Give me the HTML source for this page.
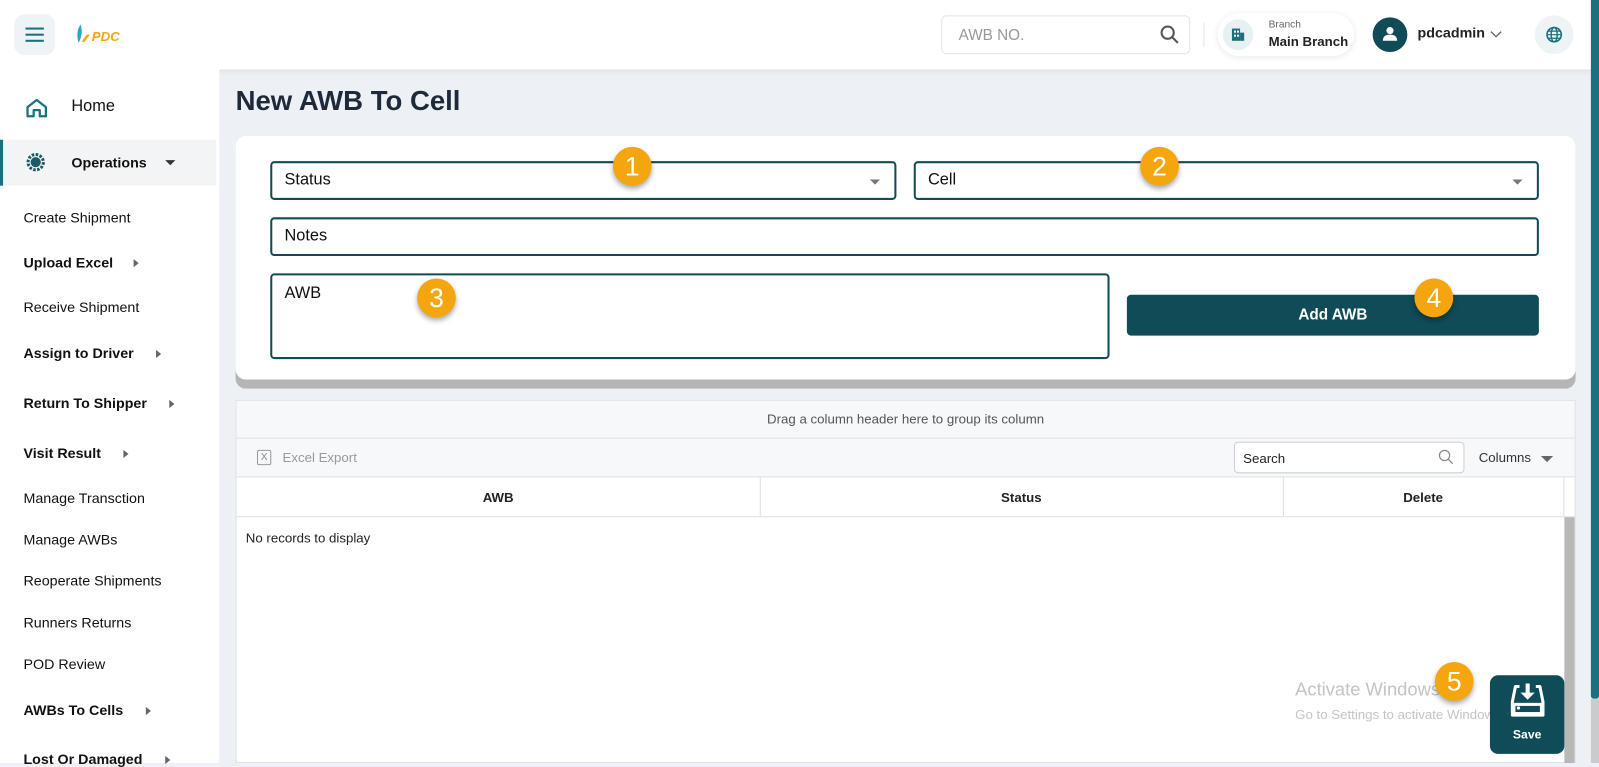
<!DOCTYPE html>
<html><head><meta charset="utf-8"><style>
*{box-sizing:border-box;margin:0;padding:0}
html,body{width:1599px;height:763px;overflow:hidden;background:#edf0f4;font-family:"Liberation Sans",Arial,sans-serif}
#w{position:absolute;left:0;top:0;width:1568px;height:748px;transform:scale(1.0198,1.0201);transform-origin:0 0;background:#edf0f4}
.a{position:absolute}
.top{left:0;top:0;width:1568px;height:68px;background:#fff;box-shadow:0 2px 6px rgba(0,0,0,.06)}
.side{left:0;top:68px;width:215px;height:680px;background:#fff}
.si{position:absolute;left:23px;font-size:14px;color:#111}
.si.b{font-weight:bold}
.tri{display:inline-block;width:0;height:0;border-top:4px solid transparent;border-bottom:4px solid transparent;border-left:5px solid #666;margin-left:14px;vertical-align:middle}
.box{position:absolute;border:2px solid #0f4c57;border-radius:4px;background:#fff;font-size:16px;color:#111;padding-left:12px}
.dd{position:absolute;right:14px;top:16px;border-left:5px solid transparent;border-right:5px solid transparent;border-top:5px solid #777}
.bd{position:absolute;width:38px;height:38px;border-radius:50%;background:#f5a60e;color:#fff;font-size:26px;text-align:center;line-height:38px;box-shadow:0 3px 5px rgba(0,0,0,.35)}
.gl{position:absolute;background:#dde1e6}
</style></head><body><div id="w">
<div class="a top">
 <div class="a" style="left:14px;top:14px;width:40px;height:40px;border-radius:10px;background:#eef3f6">
  <div class="a" style="left:11px;top:13px;width:18px;height:2px;background:#1c6f7d"></div>
  <div class="a" style="left:11px;top:19px;width:18px;height:2px;background:#1c6f7d"></div>
  <div class="a" style="left:11px;top:25px;width:18px;height:2px;background:#1c6f7d"></div>
 </div>
 <svg class="a" style="left:73px;top:22px" width="56" height="24"><path d="M6 2 Q1 9 4 20 Q9 11 6 2Z" fill="#2aa6c4"/><path d="M7 19 L12 12 L15 12 L10 19Z" fill="#f5a60e"/><text x="17" y="18" font-family="Liberation Sans" font-weight="bold" font-style="italic" font-size="13" fill="#f5a60e">PDC</text></svg>
 <div class="a" style="left:923px;top:15px;width:244px;height:38px;border:1px solid #e3e6ea;border-radius:5px;font-size:15px;color:#999;padding:10px 0 0 16px">AWB NO.</div>
 <svg class="a" style="left:1137px;top:24px" width="20" height="20"><circle cx="8" cy="8" r="6" fill="none" stroke="#555" stroke-width="2"/><path d="M12.5 12.5L18 18" stroke="#555" stroke-width="2"/></svg>
 <div class="a" style="left:1180px;top:22px;width:1px;height:24px;background:#e3e6ea"></div>
 <div class="a" style="left:1194px;top:13px;width:134px;height:42px;border-radius:21px;background:#fff;box-shadow:0 1px 6px rgba(0,0,0,.1)">
  <div class="a" style="left:5px;top:6px;width:30px;height:30px;border-radius:50%;background:#e7f0f3"></div>
  <svg class="a" style="left:13px;top:14px" width="14" height="14"><rect x="1" y="1" width="8" height="12" fill="#1c6f7d"/><rect x="9" y="5" width="4" height="8" fill="#1c6f7d"/><rect x="3" y="3" width="2" height="2" fill="#fff"/><rect x="6" y="3" width="2" height="2" fill="#fff"/><rect x="3" y="7" width="2" height="2" fill="#fff"/><rect x="6" y="7" width="2" height="2" fill="#fff"/></svg>
  <div class="a" style="left:50px;top:6px;font-size:10px;color:#666">Branch</div>
  <div class="a" style="left:50px;top:20px;font-size:13px;font-weight:bold;color:#222">Main Branch</div>
 </div>
 <div class="a" style="left:1346px;top:17px;width:34px;height:34px;border-radius:50%;background:#114b57"></div>
 <svg class="a" style="left:1354px;top:24px" width="18" height="18"><circle cx="9" cy="6" r="3.5" fill="#fff"/><path d="M2 16 Q2 10 9 10 Q16 10 16 16Z" fill="#fff"/></svg>
 <div class="a" style="left:1390px;top:24px;font-size:14px;font-weight:bold;color:#222">pdcadmin</div>
 <svg class="a" style="left:1461px;top:30px" width="12" height="8"><path d="M1 1L6 6L11 1" fill="none" stroke="#666" stroke-width="1.3"/></svg>
 <div class="a" style="left:1505px;top:15px;width:38px;height:38px;border-radius:50%;background:#eef3f6"></div>
 <svg class="a" style="left:1515px;top:25px" width="18" height="18"><circle cx="9" cy="9" r="7" fill="none" stroke="#1c6f7d" stroke-width="1.6"/><ellipse cx="9" cy="9" rx="3" ry="7" fill="none" stroke="#1c6f7d" stroke-width="1.4"/><path d="M2 9H16M3 5.5H15M3 12.5H15" stroke="#1c6f7d" stroke-width="1.2"/></svg>
</div>
<div class="a" style="left:1560px;top:0;width:8px;height:685px;background:#1c6f7d;border-radius:0 0 3px 3px"></div>
<div class="a" style="left:1560px;top:685px;width:8px;height:63px;background:#c9cbcd"></div>
<div class="a side">
 <svg class="a" style="left:25px;top:28px" width="22" height="20"><path d="M2 9L11 2L20 9V18H14V12H8V18H2Z" fill="none" stroke="#1c6f7d" stroke-width="2.2" stroke-linejoin="round"/></svg>
 <div class="a" style="left:70px;top:28px;font-size:16px;color:#111">Home</div>
 <div class="a" style="left:0;top:69px;width:212px;height:45px;background:#f3f4f5;border-left:3px solid #1c6f7d"></div>
 <svg class="a" style="left:25px;top:81px" width="20" height="20"><circle cx="10" cy="10" r="7.5" fill="none" stroke="#1c5a66" stroke-width="3" stroke-dasharray="2.5 1.4"/><circle cx="10" cy="10" r="5" fill="#1c5a66"/></svg>
 <div class="a" style="left:70px;top:83px;font-size:14px;font-weight:bold;color:#111">Operations</div>
 <div class="a" style="left:162px;top:89px;border-left:5px solid transparent;border-right:5px solid transparent;border-top:5px solid #333"></div>
 <div class="si" style="top:137px">Create Shipment</div>
 <div class="si b" style="top:181px">Upload Excel<span class="tri" style="margin-left:20px"></span></div>
 <div class="si" style="top:225px">Receive Shipment</div>
 <div class="si b" style="top:270px">Assign to Driver<span class="tri" style="margin-left:22px"></span></div>
 <div class="si b" style="top:319px">Return To Shipper<span class="tri" style="margin-left:22px"></span></div>
 <div class="si b" style="top:368px">Visit Result<span class="tri" style="margin-left:22px"></span></div>
 <div class="si" style="top:412px">Manage Transction</div>
 <div class="si" style="top:453px">Manage AWBs</div>
 <div class="si" style="top:493px">Reoperate Shipments</div>
 <div class="si" style="top:534px">Runners Returns</div>
 <div class="si" style="top:575px">POD Review</div>
 <div class="si b" style="top:620px">AWBs To Cells<span class="tri" style="margin-left:22px"></span></div>
 <div class="si b" style="top:668px">Lost Or Damaged<span class="tri" style="margin-left:22px"></span></div>
</div>
<div class="a" style="left:231px;top:84px;font-size:27px;font-weight:bold;color:#1e2a3a">New AWB To Cell</div>
<div class="a" style="left:231px;top:133px;width:1314px;height:248px;border-radius:10px;background:#b5b5b5"></div>
<div class="a" style="left:231px;top:133px;width:1314px;height:239px;border-radius:10px;background:#fff"></div>
<div class="box" style="left:265px;top:158px;width:614px;height:38px;line-height:34px">Status<div class="dd"></div></div>
<div class="box" style="left:896px;top:158px;width:613px;height:38px;line-height:34px">Cell<div class="dd"></div></div>
<div class="box" style="left:265px;top:213px;width:1244px;height:38px;line-height:34px">Notes</div>
<div class="box" style="left:265px;top:268px;width:823px;height:84px;padding-top:9px">AWB</div>
<div class="a" style="left:1105px;top:289px;width:404px;height:40px;border-radius:4px;background:#0f4c57;color:#fff;font-size:15px;font-weight:bold;text-align:center;line-height:40px">Add AWB</div>
<div class="bd" style="left:601px;top:144px">1</div>
<div class="bd" style="left:1118px;top:144px">2</div>
<div class="bd" style="left:409px;top:273px">3</div>
<div class="bd" style="left:1387px;top:273px">4</div>
<div class="a" style="left:231px;top:392px;width:1314px;height:356px;background:#fff;border:1px solid #dde1e6"></div>
<div class="a" style="left:232px;top:393px;width:1312px;height:74px;background:#f7f8fa"></div>
<div class="gl" style="left:232px;top:429px;width:1312px;height:1px"></div>
<div class="gl" style="left:232px;top:467px;width:1312px;height:1px"></div>
<div class="gl" style="left:232px;top:506px;width:1312px;height:1px"></div>
<div class="a" style="left:232px;top:403px;width:1312px;text-align:center;font-size:13px;color:#555">Drag a column header here to group its column</div>
<div class="a" style="left:252px;top:441px;width:14px;height:15px;border:1px solid #999;border-radius:2px;font-size:10px;color:#888;text-align:center;line-height:13px">X</div>
<div class="a" style="left:277px;top:441px;font-size:13px;color:#999">Excel Export</div>
<div class="a" style="left:1210px;top:433px;width:226px;height:31px;background:#fff;border:1px solid #ccd0d5;border-radius:4px;font-size:13px;color:#222;padding:8px 0 0 8px">Search</div>
<svg class="a" style="left:1410px;top:440px" width="16" height="16"><circle cx="6.5" cy="6.5" r="5" fill="none" stroke="#888" stroke-width="1.2"/><path d="M10 10L14.5 14.5" stroke="#888" stroke-width="1.2"/></svg>
<div class="a" style="left:1450px;top:441px;font-size:13px;color:#333">Columns</div>
<div class="a" style="left:1511px;top:447px;border-left:6px solid transparent;border-right:6px solid transparent;border-top:6px solid #666"></div>
<div class="gl" style="left:745px;top:468px;width:1px;height:38px"></div>
<div class="gl" style="left:1258px;top:468px;width:1px;height:38px"></div>
<div class="gl" style="left:1533px;top:468px;width:1px;height:38px"></div>
<div class="a" style="left:232px;top:480px;width:513px;text-align:center;font-size:13px;font-weight:bold;color:#222">AWB</div>
<div class="a" style="left:745px;top:480px;width:513px;text-align:center;font-size:13px;font-weight:bold;color:#222">Status</div>
<div class="a" style="left:1258px;top:480px;width:275px;text-align:center;font-size:13px;font-weight:bold;color:#222">Delete</div>
<div class="a" style="left:1534px;top:507px;width:10px;height:241px;background:#b8b8b8"></div>
<div class="a" style="left:241px;top:520px;font-size:13px;color:#222">No records to display</div>
<div class="a" style="left:1270px;top:666px;font-size:18px;color:#c4c4c4">Activate Windows</div>
<div class="a" style="left:1270px;top:693px;font-size:13px;color:#c4c4c4">Go to Settings to activate Windows.</div>
<div class="a" style="left:1461px;top:662px;width:73px;height:77px;border-radius:8px;background:#0f4c57"></div>
<svg class="a" style="left:1479px;top:668px" width="38" height="38"><path d="M11 5 H7 L4 20 V33 H34 V20 L31 5 H27" fill="none" stroke="#fff" stroke-width="3" stroke-linejoin="round"/><rect x="4" y="21" width="30" height="12" fill="#fff"/><rect x="7" y="24" width="24" height="6" fill="#0f4c57"/><circle cx="10" cy="26" r="1.6" fill="#fff"/><path d="M19 2 V15" stroke="#fff" stroke-width="4"/><path d="M12 11 L19 18 L26 11Z" fill="#fff"/></svg>
<div class="a" style="left:1461px;top:713px;width:73px;text-align:center;font-size:12px;font-weight:bold;color:#fff">Save</div>
<div class="bd" style="left:1407px;top:649px">5</div>
</div></body></html>
